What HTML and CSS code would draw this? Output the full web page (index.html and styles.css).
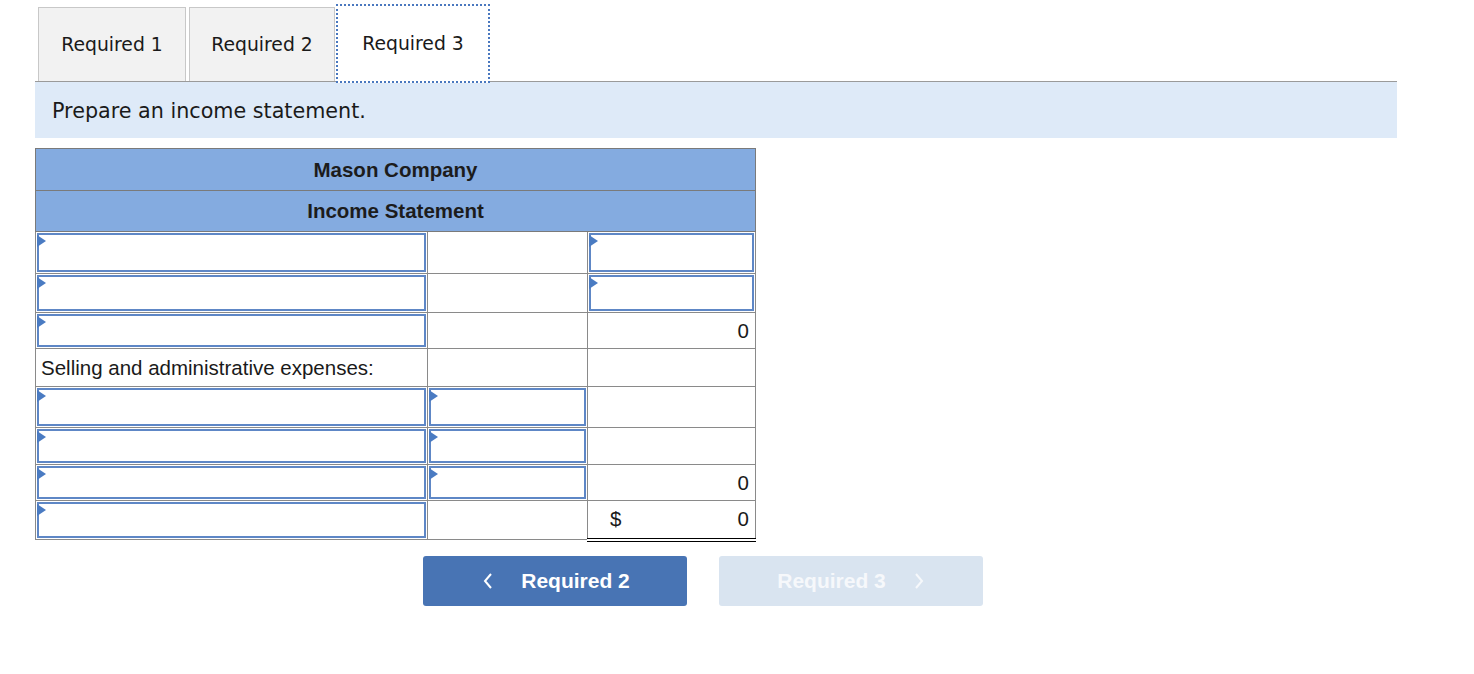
FILE: index.html
```html
<!DOCTYPE html>
<html>
<head>
<meta charset="utf-8">
<link rel="stylesheet" href="styles.css">
</head>
<body>
<div class="page">
  <div class="tabs">
    <div class="tab">Required 1</div>
    <div class="tab">Required 2</div>
    <div class="tab active">Required 3</div>
  </div>
  <div class="instr">Prepare an income statement.</div>
  <table class="stmt">
    <colgroup><col class="c1"><col class="c2"><col class="c3"></colgroup>
    <tr class="h1"><th colspan="3">Mason Company</th></tr>
    <tr class="h2"><th colspan="3">Income Statement</th></tr>
    <tr class="r1"><td class="in"><div class="box"></div></td><td></td><td class="in"><div class="box"></div></td></tr>
    <tr class="r2"><td class="in"><div class="box"></div></td><td></td><td class="in"><div class="box"></div></td></tr>
    <tr class="r3"><td class="in"><div class="box"></div></td><td></td><td class="num topblack">0</td></tr>
    <tr class="r4"><td class="label">Selling and administrative expenses:</td><td></td><td></td></tr>
    <tr class="r5"><td class="in"><div class="box"></div></td><td class="in"><div class="box"></div></td><td></td></tr>
    <tr class="r6"><td class="in"><div class="box"></div></td><td class="in"><div class="box"></div></td><td></td></tr>
    <tr class="r7"><td class="in"><div class="box"></div></td><td class="in"><div class="box"></div></td><td class="num">0</td></tr>
    <tr class="r8"><td class="in"><div class="box"></div></td><td class="topblack"></td><td class="num topblack total"><span class="dollar">$</span><span>0</span></td></tr>
  </table>
  <div class="nav">
    <div class="btn prev"><svg class="chev" width="12" height="18" viewBox="0 0 12 18"><polyline points="9,2 3,9 9,16" fill="none" stroke="#fff" stroke-width="2"/></svg><span>Required 2</span></div>
    <div class="btn next"><span>Required 3</span><svg class="chev" width="12" height="18" viewBox="0 0 12 18"><polyline points="3,2 9,9 3,16" fill="none" stroke="#f6f8fb" stroke-width="2"/></svg></div>
  </div>
</div>
</body>
</html>
```
FILE: styles.css
```css
html, body { margin: 0; padding: 0; background: #fff; }
.page { padding: 4px 0 0 35px; width: 1362px; }
.tabs { display: flex; align-items: flex-end; gap: 3px; padding-left: 3px; height: 77px; border-bottom: 1px solid #9a9a9a; position: relative; }
.tab {
  width: 146px; height: 74px; box-sizing: border-box;
  background: #f2f2f2; border: 1px solid #c8c8c8; border-bottom: none;
  display: flex; align-items: center; justify-content: center;
  font-family: "DejaVu Sans", Verdana, sans-serif; font-size: 18.8px; color: #1a1a1a;
  padding-top: 0;
}
.tab:first-child { width: 148px; }
.tab.active {
  background: #fff; width: 154px; height: 79px; margin-bottom: -2px;
  border: 2px dotted #4a78bf; margin-left: -2px;
  position: relative; z-index: 1;
}
.instr {
  height: 56px; background: #deeaf8; box-sizing: border-box;
  padding: 17px 0 0 17px;
  font-family: "DejaVu Sans", Verdana, sans-serif; font-size: 20.7px; color: #1a1a1a;
}
.stmt {
  margin-top: 10px; border-collapse: collapse; table-layout: fixed;
  font-family: "Liberation Sans", Arial, sans-serif; color: #1a1a1a;
}
.c1 { width: 392px; } .c2 { width: 160px; } .c3 { width: 168px; }
.stmt th {
  background: #84abe0; border: 1px solid #7a7a7a; font-weight: bold; font-size: 20.5px;
  text-align: center; padding: 0; color: #1c1c1c;
}
.h1 th { height: 41px; }
.h2 th { height: 40px; }
.stmt td { border: 1px solid #8a8a8a; padding: 0; font-size: 20.5px; position: relative; }
td.in { padding: 1px; }
.box { box-sizing: border-box; border: 2px solid #5e87c6; background: #fff; position: relative; }
.r1 .box { height: 39px; } .r2 .box { height: 36px; } .r3 .box { height: 33px; }
.r4 td { height: 37px; }
.r5 .box { height: 38px; } .r6 .box { height: 34px; } .r7 .box { height: 33px; } .r8 .box { height: 36px; }
.box::before {
  content: ""; position: absolute; left: -2px; top: 0;
  border-left: 9px solid #4a7bc2; border-top: 6px solid transparent; border-bottom: 6px solid transparent;
}
.label { padding-left: 5px !important; }
.num { text-align: right; padding-right: 6px !important; }
.topblack { border-top: 1px solid #000 !important; }
.total { border-bottom: 4px double #000 !important; }
.dollar { float: left; padding-left: 22px; }
.nav { display: flex; gap: 32px; margin: 14px 0 0 388px; }
.btn {
  width: 264px; height: 50px; border-radius: 3px; box-sizing: border-box;
  display: flex; align-items: center; justify-content: center; gap: 27px;
  font-family: "Liberation Sans", Arial, sans-serif; font-weight: bold; font-size: 21px; color: #fff;
}
.prev { background: #4874b4; padding-left: 2px; }
.next { background: #d9e4f0; color: #f6f8fb; }
.chev { display: block; }
```
